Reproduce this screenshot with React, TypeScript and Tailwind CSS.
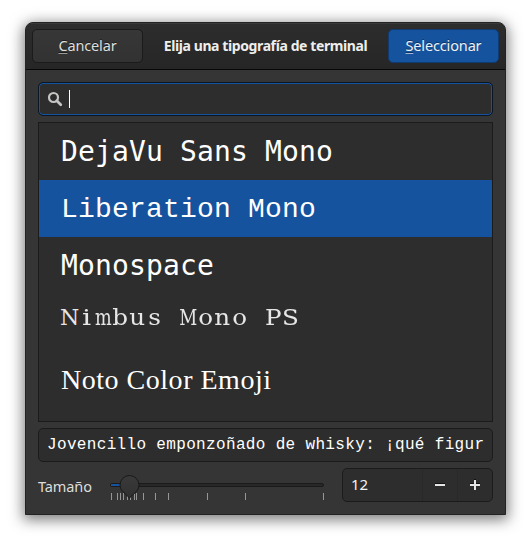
import React from "react";

const ui = "font-['Noto_Sans','Open_Sans',sans-serif]";

const ticks = [1, 7, 10, 13, 17, 20, 24, 26, 33, 45, 58, 97, 135, 213];

function glyphScale(c: string) {
  if (c === "M" || c === "m") return "-mx-1 scale-x-[0.8]";
  if (c === "N") return "scale-x-100";
  if (c === "i") return "scale-x-[1.3]";
  return "scale-x-[1.12]";
}

function Mono({ text }: { text: string }) {
  return (
    <span className="flex whitespace-pre font-['DejaVu_Serif',serif] text-[22px] leading-[48px] text-[#e6e6e6]">
      {text.split("").map((c, i) => (
        <span key={i} className="flex w-[17px] justify-center">
          <span className={glyphScale(c)}>{c}</span>
        </span>
      ))}
    </span>
  );
}

function Slider() {
  return (
    <svg width="222" height="34" viewBox="0 0 222 34" className="-ml-1 shrink-0">
      <rect x="4.5" y="15.5" width="213" height="3" rx="1.5" fill="#282828" stroke="#1b1b1b" />
      <rect x="5" y="16" width="20" height="2" fill="#15539e" />
      {ticks.map((t) => (
        <rect key={t} x={4 + t} y="25" width="1" height="7" fill="#979797" />
      ))}
      <path
        d="M23.500 7.500a9.500 9.500 0 0 1 9.500 9.500c0 3-1.400 5.200-3 6.800L23.500 30 17 23.800c-1.600-1.600-3-3.800-3-6.800a9.500 9.500 0 0 1 9.500-9.500Z"
        fill="url(#knob)"
        stroke="#181818"
      />
      <defs>
        <linearGradient id="knob" x1="0" y1="0" x2="0" y2="1">
          <stop offset="0" stopColor="#3a3a3a" />
          <stop offset="1" stopColor="#303030" />
        </linearGradient>
      </defs>
    </svg>
  );
}

export default function App() {
  return (
    <div className={`h-[543px] w-[531px] overflow-hidden bg-white px-[25px] pt-[22px] ${ui} text-[#eeeeec]`}>
      <div className="flex h-[493px] w-[481px] flex-col overflow-hidden rounded-t-[8px] border border-[#232323] bg-[#353535] shadow-[0_3px_14px_2px_rgba(0,0,0,0.5)]">
        <header className="flex h-[47px] shrink-0 items-start justify-between border-b border-[#070707] bg-linear-to-b from-[#2d2d2d] to-[#262626] px-[6px] pt-[6px] shadow-[inset_0_1px_0_#3a3a3a]">
          <button className="flex h-[34px] w-[111px] justify-center rounded-[5px] border border-[#1b1b1b] bg-linear-to-b from-[#373737] to-[#323232] text-[14.5px] leading-[31px] tracking-[-0.15px] text-[#dededc] [text-shadow:0_-1px_#1c1c1c]">
            <span className="underline decoration-[#999] underline-offset-2">C</span>ancelar
          </button>
          <h1 className="pt-[2px] text-[14px] leading-[30px] font-bold tracking-[-0.4px] whitespace-nowrap">
            Elija una tipografía de terminal
          </h1>
          <button className="flex h-[34px] w-[111px] justify-center rounded-[5px] border border-[#0f3b71] bg-[#15539e] text-[14.5px] leading-[31px] tracking-[-0.15px] text-[#eef2f7] [text-shadow:0_-1px_#0c3467]">
            <span className="underline decoration-[#a0b8d8] underline-offset-2">S</span>eleccionar
          </button>
        </header>

        <div className="flex flex-col px-[12px] pt-[12px]">
          <div className="flex h-[34px] items-center rounded-[5px] border border-[#0b1625] bg-[#2d2d2d] pl-[8px] shadow-[inset_0_0_0_1px_#15539e]">
            <svg width="16" height="16" viewBox="0 0 16 16" fill="none" stroke="#c5c5c3">
              <circle cx="6.500" cy="6.500" r="4.500" strokeWidth="2.200" />
              <path d="M9.800 9.800l4 4" strokeWidth="2.700" strokeLinecap="round" />
            </svg>
            <span className="ml-[6px] h-[18px] w-px bg-white" />
          </div>

          <ul className="mt-[6px] h-[300px] border border-[#1b1b1b] bg-[#2d2d2d] text-[28px] whitespace-nowrap text-white">
            <li className="h-[57px] pl-[22px] font-['DejaVu_Sans_Mono',monospace] leading-[57px] tracking-[0.14px]">DejaVu Sans Mono</li>
            <li className="h-[57px] bg-[#15539e] pt-px pl-[22px] font-['Liberation_Mono',monospace] leading-[57px] tracking-[0.2px]">Liberation Mono</li>
            <li className="h-[57px] pl-[22px] font-['DejaVu_Sans_Mono',monospace] leading-[57px] tracking-[0.14px]">Monospace</li>
            <li className="h-[47px] pl-[22px]">
              <Mono text="Nimbus Mono PS" />
            </li>
            <li className="h-[80px] pl-[22px] font-['Liberation_Serif',serif] leading-[78px] tracking-[0.52px]">Noto Color Emoji</li>
          </ul>

          <div className="mt-[6px] h-[34px] rounded-[5px] border border-[#1b1b1b] bg-[#2d2d2d] px-[8px]">
            <div className="pt-px font-['Liberation_Mono',monospace] text-[16px] leading-[30px] tracking-[0.34px] whitespace-nowrap text-white">
              Jovencillo emponzoñado de whisky: ¡qué figur
            </div>
          </div>

          <div className="mt-[6px] flex h-[34px] items-center">
            <label className="w-[72px] pt-[3px] text-[14.5px] tracking-[-0.1px] text-[#dededc]">Tamaño</label>
            <Slider />
            <div className="ml-auto flex h-[34px] w-[151px] rounded-[5px] border border-[#1b1b1b] bg-[#2d2d2d]">
              <span className="flex-1 pl-[8px] text-[15px] leading-[31px] text-[#f2f2f2]">12</span>
              <span className="flex w-[35px] items-center justify-center border-l border-[#292929]">
                <svg width="16" height="16" viewBox="0 0 16 16">
                  <path d="M3 6h10v1H3z" fill="#111" />
                  <path d="M3 7h10v2H3z" fill="#e5e5e3" />
                </svg>
              </span>
              <span className="flex w-[35px] items-center justify-center border-l border-[#292929]">
                <svg width="16" height="16" viewBox="0 0 16 16">
                  <path d="M3 6h10v1H3zM7 2h2v1H7z" fill="#111" />
                  <path d="M3 7h4V3h2v4h4v2H9v4H7V9H3z" fill="#e5e5e3" />
                </svg>
              </span>
            </div>
          </div>
        </div>
      </div>
    </div>
  );
}
